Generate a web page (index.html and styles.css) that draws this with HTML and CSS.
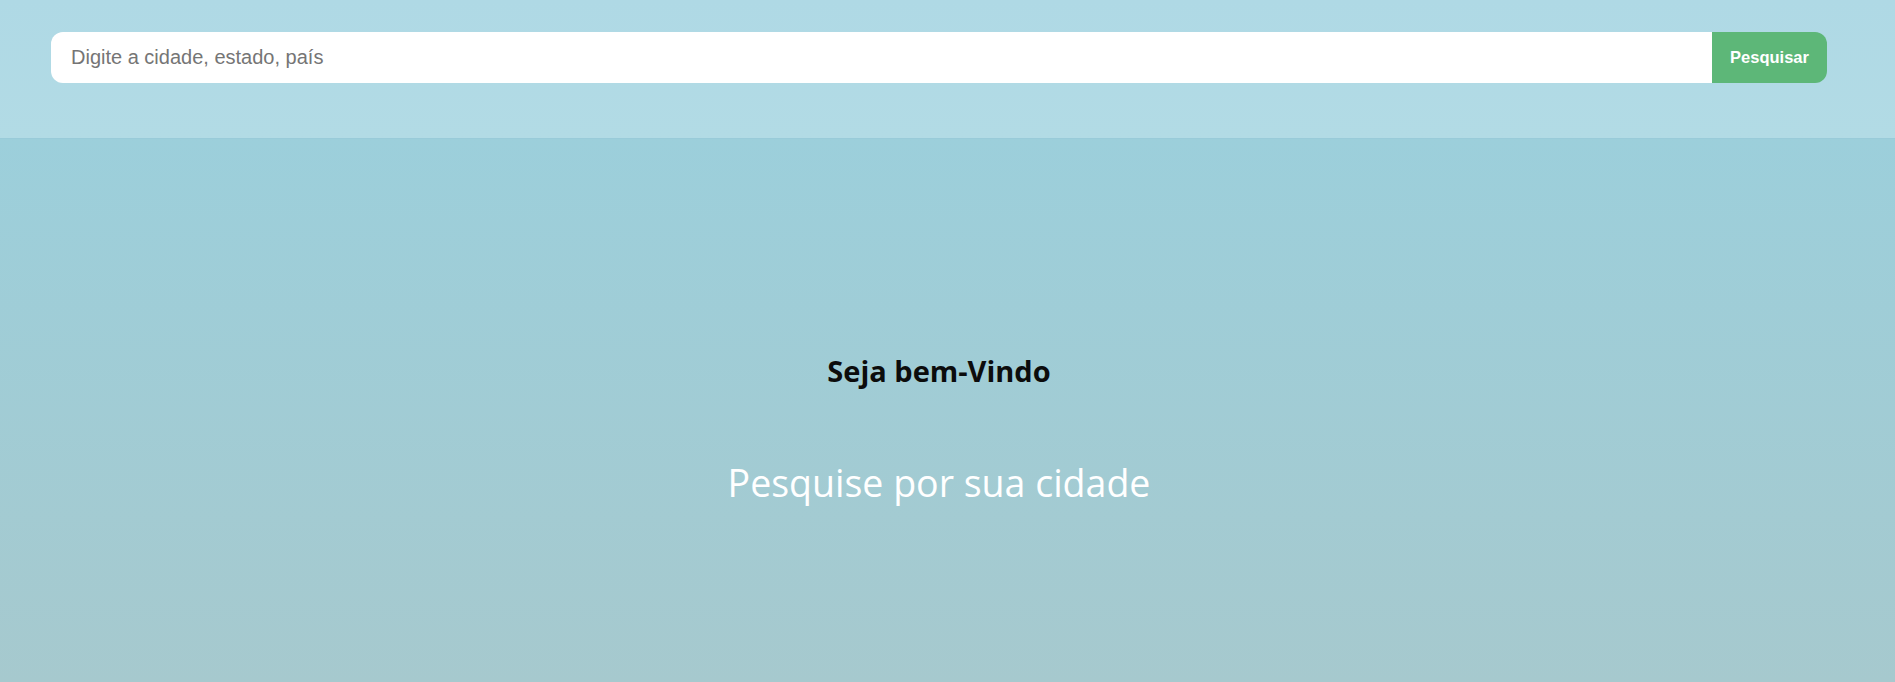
FILE: index.html
```html
<!DOCTYPE html>
<html lang="pt-BR">
<head>
<meta charset="utf-8">
<title>Clima</title>
<link rel="stylesheet" href="styles.css">
</head>
<body>
<header class="topbar">
  <form class="search">
    <input class="search-input" type="text" placeholder="Digite a cidade, estado, país">
    <button class="search-btn" type="button">Pesquisar</button>
  </form>
</header>
<main class="welcome">
  <h1 class="welcome-title">Seja bem-Vindo</h1>
  <p class="welcome-sub">Pesquise por sua cidade</p>
</main>
</body>
</html>
```
FILE: styles.css
```css
html, body {
  margin: 0;
  padding: 0;
  height: 100%;
}
body {
  font-family: "Open Sans", "Noto Sans", sans-serif;
  background: #a6c9ce;
  display: flex;
  flex-direction: column;
}
.topbar {
  height: 138px;
  box-sizing: border-box;
  padding: 32px 68px 0 51px;
  background: linear-gradient(#afd9e5, #b2dbe5);
  box-shadow: 0 1px 0 rgba(150, 200, 215, 0.5);
  position: relative;
  z-index: 1;
}
.search {
  display: flex;
  height: 51px;
  margin: 0;
}
.search-input {
  flex: 1;
  border: none;
  outline: none;
  margin: 0;
  padding: 0 20px;
  height: 51px;
  box-sizing: border-box;
  border-radius: 12px 0 0 12px;
  background: #ffffff;
  font-family: "Liberation Sans", Arial, sans-serif;
  font-size: 20px;
  color: #333;
}
.search-input::placeholder {
  color: #757575;
}
.search-btn {
  width: 115px;
  height: 51px;
  margin: 0;
  border: none;
  border-radius: 0 12px 12px 0;
  background: #5db778;
  color: #ffffff;
  font-family: "Liberation Sans", Arial, sans-serif;
  font-weight: bold;
  font-size: 16.5px;
  padding: 0;
  cursor: pointer;
}
.welcome {
  flex: 1;
  display: flex;
  flex-direction: column;
  align-items: center;
  padding: 213px 17px 0 0;
  background: linear-gradient(#9ccfdb, #a6c9ce);
}
.welcome-title {
  margin: 0;
  font-size: 29px;
  font-weight: 700;
  color: #0c0c0c;
}
.welcome-sub {
  margin: 67px 0 0;
  font-size: 37.5px;
  font-weight: 400;
  color: #ffffff;
}
```
